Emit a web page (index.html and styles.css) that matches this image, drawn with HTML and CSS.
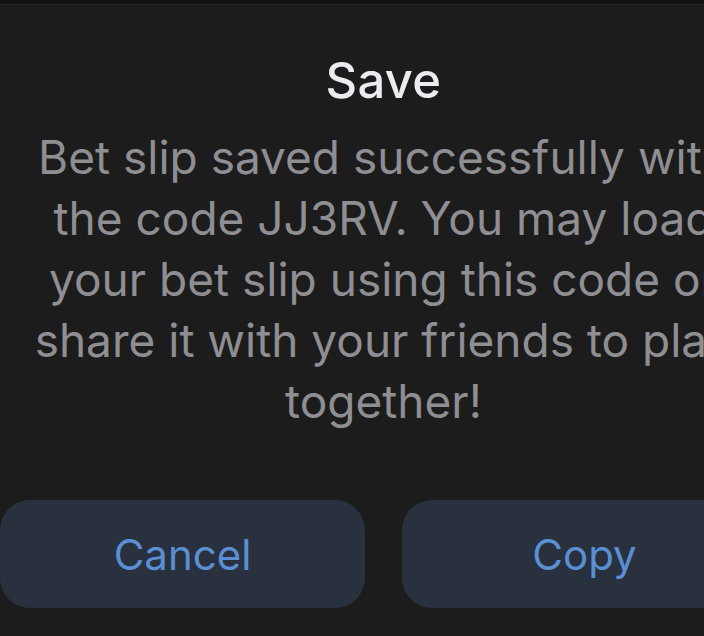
FILE: index.html
```html
<!DOCTYPE html>
<html lang="en">
<head>
<meta charset="utf-8">
<title>Save</title>
<link rel="stylesheet" href="styles.css">
</head>
<body>
  <div class="sheet-edge"></div>
  <div class="alert">
    <h1 class="alert-title">Save</h1>
    <p class="alert-message">Bet slip saved successfully with the code JJ3RV. You may load your bet slip using this code or share it with your friends to play together!</p>
    <div class="alert-actions">
      <button class="alert-btn">Cancel</button>
      <button class="alert-btn">Copy</button>
    </div>
  </div>
</body>
</html>
```

FILE: styles.css
```css
html, body {
  margin: 0;
  padding: 0;
  background: #1c1c1c;
  overflow: hidden;
}

body {
  width: 704px;
  height: 636px;
  font-family: "Inter", "Roboto", sans-serif;
}

/* thin top edge of the sheet behind the dialog */
.sheet-edge {
  height: 4px;
  background: #121212;
  border-bottom: 1px solid #262626;
}

.alert {
  width: 767px;
  display: flex;
  flex-direction: column;
  align-items: center;
}

.alert-title {
  margin: 46px 0 0;
  font-size: 49px;
  line-height: 59px;
  font-weight: 500;
  color: #ebebf0;
  letter-spacing: 0.3px;
}

.alert-message {
  margin: 17px 0 0;
  width: 700px;
  text-align: center;
  font-size: 46px;
  line-height: 61px;
  font-weight: 400;
  color: #8e8e93;
}

.alert-actions {
  margin-top: 68px;
  display: flex;
  gap: 37px;
  width: 767px;
}

.alert-btn {
  flex: 1;
  height: 108px;
  border: none;
  border-radius: 30px;
  background: #28313d;
  color: #5b8fd3;
  font-family: "Inter", "Roboto", sans-serif;
  font-size: 42px;
  font-weight: 400;
  padding: 0;
}
```
